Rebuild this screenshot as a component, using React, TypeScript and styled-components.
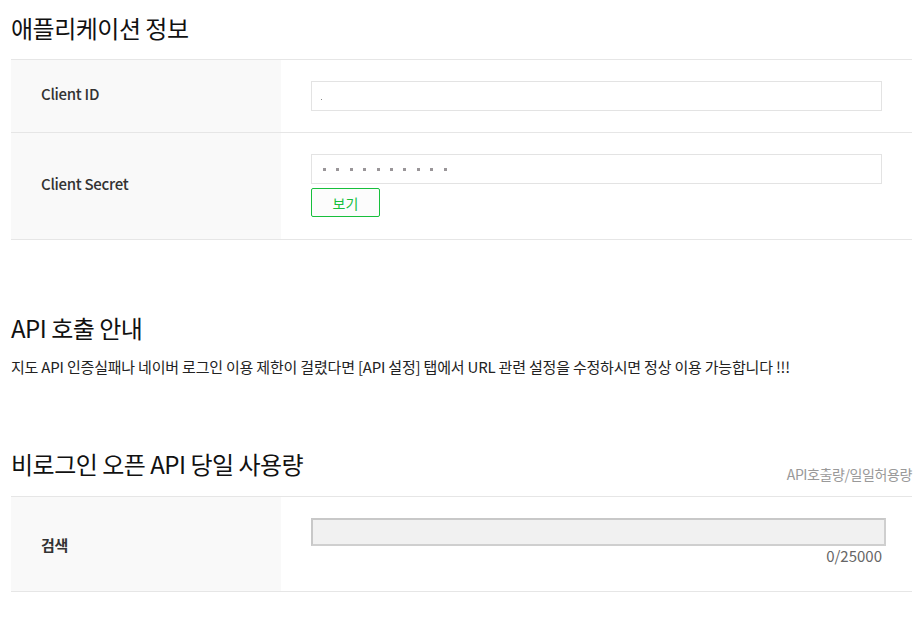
import React from "react";
import styled, { createGlobalStyle } from "styled-components";

const Global = createGlobalStyle`
  html, body { margin: 0; padding: 0; background: #fff; }
  body { font-family: "Noto Sans CJK KR", "Noto Sans", sans-serif; color: #222; }
  * { box-sizing: border-box; }
`;

const Page = styled.div`
  width: 901px;
  margin-left: 11px;
  display: flex;
  flex-direction: column;
`;

const Section = styled.section<{ $top: number }>`
  margin-top: ${(p) => p.$top}px;
  display: flex;
  flex-direction: column;
`;

const HeadRow = styled.div<{ $pb: number }>`
  display: flex;
  align-items: flex-end;
  justify-content: space-between;
  height: 45px;
  padding-bottom: ${(p) => p.$pb}px;
`;

const Title = styled.h2`
  margin: 0;
  font-size: 24px;
  font-weight: 400;
  letter-spacing: -0.5px;
  color: #111;
  line-height: 30px;
`;

const Note = styled.span`
  font-size: 14px;
  color: #999;
  letter-spacing: -0.4px;
  line-height: 18px;
  margin-bottom: -4px;
`;

const Paragraph = styled.p`
  margin: 4px 0 0;
  font-size: 15px;
  line-height: 20px;
  letter-spacing: -0.2px;
  color: #222;
`;

const Table = styled.div`
  border-top: 1px solid #e6e6e6;
  display: flex;
  flex-direction: column;
`;

const Row = styled.div`
  display: grid;
  grid-template-columns: 270px 1fr;
  border-bottom: 1px solid #e6e6e6;
`;

const Label = styled.div<{ $bold?: boolean }>`
  background: #f9f9f9;
  display: flex;
  align-items: center;
  padding-left: 30px;
  padding-bottom: ${(p) => (p.$bold ? 0 : 5)}px;
  font-size: 15px;
  font-weight: ${(p) => (p.$bold ? 700 : 500)};
  color: #333;
  letter-spacing: -0.3px;
`;

const Cell = styled.div<{ $bottom?: number }>`
  padding: 21px 30px ${(p) => p.$bottom ?? 21}px;
  display: flex;
  flex-direction: column;
  align-items: flex-start;
`;

const Field = styled.div`
  width: 100%;
  height: 30px;
  border: 1px solid #e3e3e3;
  display: flex;
  align-items: center;
  gap: 10.4px;
  padding-left: 11px;
`;

const Dot = styled.span`
  width: 3px;
  height: 3px;
  background: #9a9699;
  display: inline-block;
`;

const TinyDot = styled.span`
  width: 1px;
  height: 1px;
  background: #888;
  margin-top: 6px;
  margin-left: -2px;
  display: inline-block;
`;

const ViewButton = styled.button`
  margin-top: 4px;
  width: 69px;
  height: 29px;
  border: 1px solid #17bf3c;
  border-radius: 2px;
  background: #fcfcfc;
  color: #17bf3c;
  font-family: "Noto Sans CJK KR", sans-serif;
  font-size: 14px;
  padding: 0;
  cursor: pointer;
`;

const Bar = styled.div`
  width: calc(100% + 4px);
  height: 28px;
  background: #f1f1f1;
  border: 2px solid #cfcfcf;
  border-top-color: #c8c8c8;
  border-left-color: #c8c8c8;
`;

const Count = styled.div`
  align-self: flex-end;
  font-size: 15px;
  line-height: 20px;
  color: #666;
`;

export default function App() {
  return (
    <>
      <Global />
      <Page>
        <Section $top={14}>
          <HeadRow $pb={16}>
            <Title>애플리케이션 정보</Title>
          </HeadRow>
          <Table>
            <Row>
              <Label>Client ID</Label>
              <Cell>
                <Field>
                  <TinyDot />
                </Field>
              </Cell>
            </Row>
            <Row>
              <Label>Client Secret</Label>
              <Cell $bottom={22}>
                <Field>
                  {Array.from({ length: 10 }).map((_, i) => (
                    <Dot key={i} />
                  ))}
                </Field>
                <ViewButton>보기</ViewButton>
              </Cell>
            </Row>
          </Table>
        </Section>

        <Section $top={68}>
          <HeadRow $pb={10}>
            <Title>API 호출 안내</Title>
          </HeadRow>
          <Paragraph>
            지도 API 인증실패나 네이버 로그인 이용 제한이 걸렸다면 [API 설정] 탭에서 URL 관련 설정을 수정하시면 정상 이용 가능합니다 !!!
          </Paragraph>
        </Section>

        <Section $top={74}>
          <HeadRow $pb={17}>
            <Title>비로그인 오픈 API 당일 사용량</Title>
            <Note>API호출량/일일허용량</Note>
          </HeadRow>
          <Table>
            <Row>
              <Label $bold>검색</Label>
              <Cell $bottom={25}>
                <Bar />
                <Count>0/25000</Count>
              </Cell>
            </Row>
          </Table>
        </Section>
      </Page>
    </>
  );
}
